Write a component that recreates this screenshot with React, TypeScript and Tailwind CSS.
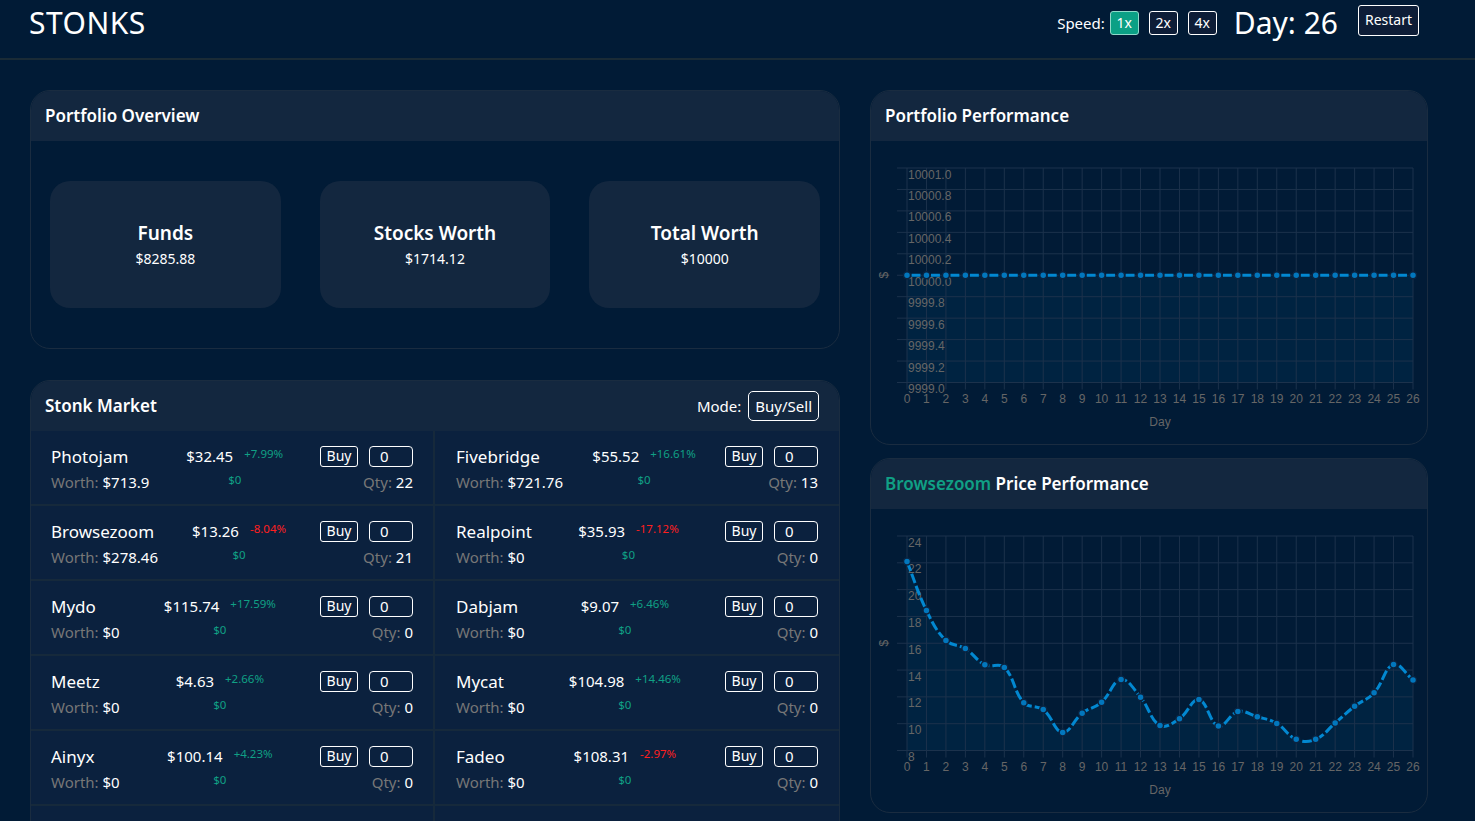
import React from "react";

type Stock = {
  name: string;
  price: string;
  change: string;
  up: boolean;
  worth: string;
  qty: number;
};

const stocks: Stock[] = [
  { name: "Photojam", price: "$32.45", change: "+7.99%", up: true, worth: "$713.9", qty: 22 },
  { name: "Fivebridge", price: "$55.52", change: "+16.61%", up: true, worth: "$721.76", qty: 13 },
  { name: "Browsezoom", price: "$13.26", change: "-8.04%", up: false, worth: "$278.46", qty: 21 },
  { name: "Realpoint", price: "$35.93", change: "-17.12%", up: false, worth: "$0", qty: 0 },
  { name: "Mydo", price: "$115.74", change: "+17.59%", up: true, worth: "$0", qty: 0 },
  { name: "Dabjam", price: "$9.07", change: "+6.46%", up: true, worth: "$0", qty: 0 },
  { name: "Meetz", price: "$4.63", change: "+2.66%", up: true, worth: "$0", qty: 0 },
  { name: "Mycat", price: "$104.98", change: "+14.46%", up: true, worth: "$0", qty: 0 },
  { name: "Ainyx", price: "$100.14", change: "+4.23%", up: true, worth: "$0", qty: 0 },
  { name: "Fadeo", price: "$108.31", change: "-2.97%", up: false, worth: "$0", qty: 0 },
  { name: "Zoonder", price: "$61.20", change: "+3.12%", up: true, worth: "$0", qty: 0 },
  { name: "Quatz", price: "$22.87", change: "-1.45%", up: false, worth: "$0", qty: 0 },
];

const portfolioHistory = Array.from({ length: 27 }, () => 10000);

const browsezoomHistory = [
  22.1, 18.45, 16.2, 15.6, 14.4, 14.2, 11.57, 11.05, 9.35, 10.78, 11.6, 13.3, 11.97, 9.87,
  10.37, 11.8, 9.82, 10.9, 10.52, 10.02, 8.83, 8.83, 10.05, 11.3, 12.3, 14.42, 13.26,
];

type Pt = { x: number; y: number };

// chart.js style spline, tension 0.4
function splinePath(pts: Pt[], tension = 0.4) {
  const cps = pts.map((p, i) => {
    const prev = pts[i - 1] ?? p;
    const next = pts[i + 1] ?? p;
    const d01 = Math.hypot(p.x - prev.x, p.y - prev.y);
    const d12 = Math.hypot(next.x - p.x, next.y - p.y);
    const tot = d01 + d12 || 1;
    const fa = (tension * d01) / tot;
    const fb = (tension * d12) / tot;
    return {
      prev: { x: p.x - fa * (next.x - prev.x), y: p.y - fa * (next.y - prev.y) },
      next: { x: p.x + fb * (next.x - prev.x), y: p.y + fb * (next.y - prev.y) },
    };
  });
  let d = `M ${pts[0].x} ${pts[0].y}`;
  for (let i = 1; i < pts.length; i++) {
    const a = cps[i - 1].next;
    const b = cps[i].prev;
    d += ` C ${a.x} ${a.y} ${b.x} ${b.y} ${pts[i].x} ${pts[i].y}`;
  }
  return d;
}

function LineChart({
  values,
  yMin,
  yMax,
  step,
  digits,
  dash,
  dashOffset,
}: {
  values: number[];
  yMin: number;
  yMax: number;
  step: number;
  digits: number;
  dash: string;
  dashOffset?: number;
}) {
  const L = 36;
  const R = 542;
  const T = 27;
  const B = 241.5;
  const n = values.length - 1;
  const xAt = (i: number) => L + (i * (R - L)) / n;
  const yAt = (v: number) => T + ((yMax - v) / (yMax - yMin)) * (B - T);
  const ticks: number[] = [];
  const count = Math.round((yMax - yMin) / step);
  for (let k = 0; k <= count; k++) ticks.push(yMax - k * step);
  const pts = values.map((v, i) => ({ x: xAt(i), y: yAt(v) }));
  const line = splinePath(pts);
  const area = `${line} L ${R} ${B} L ${L} ${B} Z`;
  const font = "'Liberation Sans', Arial, sans-serif";

  return (
    <svg width="556" height="303" className="block">
      <path d={area} fill="rgba(2,136,209,0.08)" />
      {ticks.map((t) => (
        <line key={`h${t}`} x1={26} x2={R} y1={yAt(t)} y2={yAt(t)} stroke="#1c324c" strokeWidth="1" />
      ))}
      {values.map((_, i) => (
        <line key={`v${i}`} x1={xAt(i)} x2={xAt(i)} y1={T} y2={B + 7} stroke="#1c324c" strokeWidth="1" />
      ))}
      {ticks.map((t) => (
        <text key={`l${t}`} x={L + 1} y={yAt(t) + 10.5} fontSize="12" fill="#666" fontFamily={font}>
          {t.toFixed(digits)}
        </text>
      ))}
      {values.map((_, i) => (
        <text key={`x${i}`} x={xAt(i)} y={262} fontSize="12" fill="#666" textAnchor="middle" fontFamily={font}>
          {i}
        </text>
      ))}
      <text x={(L + R) / 2} y={285} fontSize="12" fill="#666" textAnchor="middle" fontFamily={font}>
        Day
      </text>
      <text
        x={14}
        y={(T + B) / 2}
        fontSize="12"
        fill="#666"
        textAnchor="middle"
        dominantBaseline="middle"
        fontFamily={font}
        transform={`rotate(-90 14 ${(T + B) / 2})`}
      >
        $
      </text>
      <path
        d={line}
        fill="none"
        stroke="#0288d1"
        strokeWidth="3"
        strokeDasharray={dash}
        strokeDashoffset={dashOffset ?? 0}
      />
      {pts.map((p, i) => (
        <circle key={`p${i}`} cx={p.x} cy={p.y} r="3.5" fill="#0277bd" stroke="#0a2340" strokeWidth="1.5" />
      ))}
    </svg>
  );
}

function Card({ title, children }: { title: React.ReactNode; children: React.ReactNode }) {
  return (
    <div className="overflow-hidden rounded-[20px] border border-[#1a2c40]">
      <div className="flex h-[50px] items-center bg-[#13273f] px-[14px] text-[17px] font-semibold text-white">
        {title}
      </div>
      {children}
    </div>
  );
}

function StatBox({ label, value }: { label: string; value: string }) {
  return (
    <div className="flex h-[127px] flex-col items-center justify-center rounded-[20px] bg-[#13273f]">
      <div className="text-[19px] font-semibold leading-[24px] text-white">{label}</div>
      <div className="mt-[4px] text-[14px] leading-[20px] text-white">{value}</div>
    </div>
  );
}

function StockCell({ s, left }: { s: Stock; left: boolean }) {
  return (
    <div
      className={`flex h-[75px] items-center justify-between border-b-2 border-[#16293b] bg-[#0b213e] pt-[3px] ${
        left ? "border-r-2 pl-[20px] pr-[20px]" : "pl-[21px] pr-[21px]"
      }`}
    >
      <div className="flex flex-col">
        <span className="text-[17px] leading-[24px] text-white">{s.name}</span>
        <span className="mt-[2px] text-[15px] leading-[22px]">
          <span className="text-[#777]">Worth: </span>
          <span className="text-white">{s.worth}</span>
        </span>
      </div>
      <div className="flex flex-col items-center pb-[5px]">
        <div className="flex items-start gap-[11px]">
          <span className="text-[15px] leading-[20px] text-white">{s.price}</span>
          <span className={`text-[11.5px] leading-[16px] ${s.up ? "text-[#10a085]" : "text-[#ff1f1f]"}`}>
            {s.change}
          </span>
        </div>
        <span className="mt-[6px] text-[11.5px] leading-[16px] text-[#10a085]">$0</span>
      </div>
      <div className="flex flex-col items-end">
        <div className="flex gap-[11px]">
          <button className="flex h-[21px] w-[38px] items-center justify-center rounded-[3px] border border-white text-[14px] leading-none text-white">
            Buy
          </button>
          <div className="flex h-[21px] w-[44px] items-center rounded-[4px] border border-white pl-[10px] text-[15px] leading-none text-white">
            0
          </div>
        </div>
        <span className="mt-[4px] text-[15px] leading-[22px]">
          <span className="text-[#777]">Qty: </span>
          <span className="text-white">{s.qty}</span>
        </span>
      </div>
    </div>
  );
}

export default function App() {
  return (
    <div className="h-[821px] overflow-hidden bg-[#011b36] font-['Noto_Sans',sans-serif] text-white">
      <header className="flex h-[60px] items-center justify-between border-b-2 border-[#1a2b36] pb-[12px] pl-[29px] pr-[56px]">
        <h1 className="text-[30px] leading-none tracking-[0.5px] text-white">STONKS</h1>
        <div className="flex items-center">
          <span className="text-[15px]">Speed:</span>
          <div className="ml-[5px] flex gap-[10px]">
            <button className="h-[24px] w-[29px] rounded-[3px] border border-[#8fd9c9] bg-[#0ba085] text-[14px] leading-none text-white">
              1x
            </button>
            <button className="h-[24px] w-[29px] rounded-[3px] border border-white bg-[#0d1d37] text-[14px] leading-none text-white">
              2x
            </button>
            <button className="h-[24px] w-[29px] rounded-[3px] border border-white bg-[#0d1d37] text-[14px] leading-none text-white">
              4x
            </button>
          </div>
          <span className="ml-[17px] text-[30px] leading-none">Day: 26</span>
          <button className="ml-[20px] mb-[6px] h-[31px] w-[61px] rounded-[3px] border border-white bg-[#0d1d37] text-[14px] leading-none text-white">
            Restart
          </button>
        </div>
      </header>

      <main className="flex gap-[30px] px-[30px] pt-[30px]">
        <div className="flex w-[810px] flex-col gap-[31px]">
          <Card title="Portfolio Overview">
            <div className="grid grid-cols-3 gap-[39px] px-[19px] py-[40px]">
              <StatBox label="Funds" value="$8285.88" />
              <StatBox label="Stocks Worth" value="$1714.12" />
              <StatBox label="Total Worth" value="$10000" />
            </div>
          </Card>

          <div className="overflow-hidden rounded-[20px] border border-[#1a2c40]">
            <div className="flex h-[50px] items-center justify-between bg-[#13273f] pl-[14px] pr-[20px]">
              <span className="text-[17px] font-semibold text-white">Stonk Market</span>
              <div className="flex items-center">
                <span className="text-[15px]">Mode:</span>
                <button className="ml-[7px] h-[30px] rounded-[5px] border border-white px-[6px] text-[15px] leading-none text-white">
                  Buy/Sell
                </button>
              </div>
            </div>
            <div className="grid grid-cols-2">
              {stocks.map((s, i) => (
                <StockCell key={s.name} s={s} left={i % 2 === 0} />
              ))}
            </div>
          </div>
        </div>

        <div className="flex w-[558px] flex-col gap-[13px]">
          <Card title="Portfolio Performance">
            <LineChart
              values={portfolioHistory}
              yMin={9999}
              yMax={10001}
              step={0.2}
              digits={1}
              dash="9 10.46"
              dashOffset={-4.5 + 9 + 10.46}
            />
          </Card>
          <Card
            title={
              <span>
                <span className="text-[#10a085]">Browsezoom</span> Price Performance
              </span>
            }
          >
            <LineChart values={browsezoomHistory} yMin={8} yMax={24} step={2} digits={0} dash="10 3" />
          </Card>
        </div>
      </main>
    </div>
  );
}
